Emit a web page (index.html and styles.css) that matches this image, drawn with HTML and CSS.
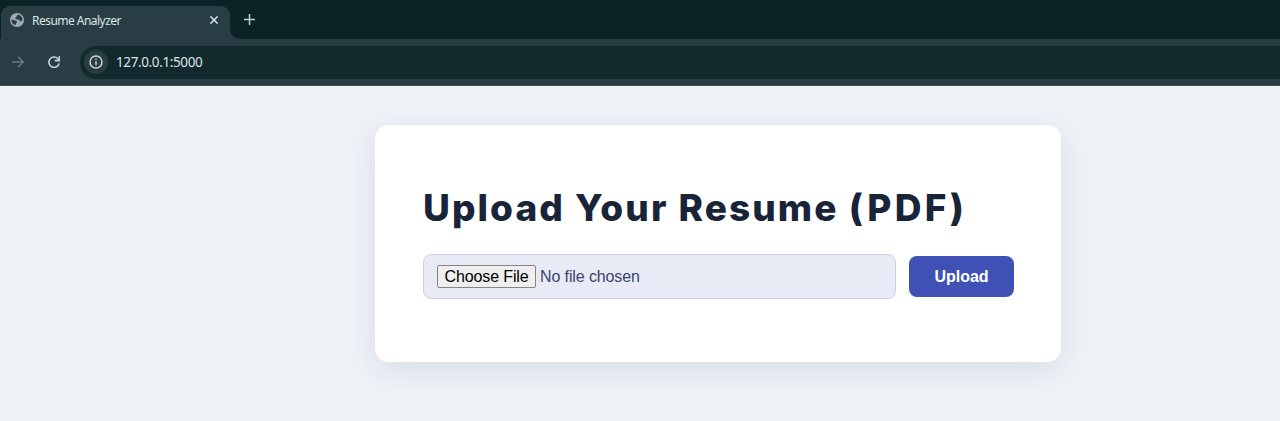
FILE: index.html
```html
<!DOCTYPE html>
<html lang="en">
<head>
<meta charset="utf-8">
<title>Resume Analyzer</title>
<link rel="stylesheet" href="styles.css">
</head>
<body>
<header class="browser">
  <div class="tabs">
    <div class="tab">
      <svg class="globe" viewBox="0 0 14 14"><circle cx="7" cy="7" r="7" fill="#a2adb3"/><path d="M8.500 1.700C7.300 2 6.300 2.800 6.500 3.800c.2.800-1.300.5-1.300 1.500 0 1.200 1.500 1.300 3 1.300 1.300 0 1 1.600 2 1.700 1 .1 1.400-.5 2.200-.9A5.500 5.500 0 0 0 8.500 1.700zM1.500 6.500c1.300 0 2.100.8 3.500.9 1.600.1 2.200.9 1.900 2-.2.800-1.200.7-1.200 1.600v1.300A5.600 5.600 0 0 1 1.500 6.500z" fill="#293e44"/></svg>
      <span class="tab-title">Resume Analyzer</span>
      <svg class="close" viewBox="0 0 8 8"><path d="M.4.4l7.200 7.200M7.600.4L.4 7.600" stroke="#dce5e8" stroke-width="1.500"/></svg>
    </div>
    <svg class="curve" viewBox="0 0 10 10"><path d="M0 0a10 10 0 0 0 10 10H0z" fill="#293e44"/></svg>
    <svg class="plus" viewBox="0 0 11 11"><path d="M5.500 0v11M0 5.500h11" stroke="#b9ced2" stroke-width="1.500"/></svg>
  </div>
  <div class="toolbar">
    <svg class="forward" viewBox="0 0 12 12"><path d="M.3 6h11M6 .7L11.300 6 6 11.300" fill="none" stroke="#6d7e83" stroke-width="1.400"/></svg>
    <svg class="reload" viewBox="0 0 12 12"><path d="M11.200 7.300A5.200 5.200 0 1 1 9.700 2.400L11.300 4" fill="none" stroke="#c5d5d9" stroke-width="1.600"/><path d="M11.400 0v4.600H6.800" fill="none" stroke="#c5d5d9" stroke-width="1.600"/></svg>
    <div class="address">
      <span class="info"><svg viewBox="0 0 14 14"><circle cx="7" cy="7" r="6" fill="none" stroke="#cad6da" stroke-width="1.500"/><path d="M7 6.200v4.100M7 3.600v1.500" stroke="#cad6da" stroke-width="1.500"/></svg></span>
      <span class="url">127.0.0.1:5000</span>
    </div>
  </div>
</header>
<main class="page">
  <section class="card">
    <h1 class="heading">Upload Your Resume <span class="format">(PDF)</span></h1>
    <form class="upload-form">
      <input class="file" type="file" accept=".pdf">
      <button class="submit" type="button">Upload</button>
    </form>
  </section>
</main>
</body>
</html>
```
FILE: styles.css
```css
* { box-sizing: border-box; }
body {
  margin: 0;
  height: 421px;
  overflow: hidden;
  background: #eff3f8;
  font-family: "Liberation Sans", Arial, sans-serif;
}
svg { display: block; flex: none; }
.browser {
  height: 86px;
  background: #293e44;
  border-bottom: 1px solid #3e4b50;
  font-family: "Noto Sans", sans-serif;
}
.tabs {
  display: flex;
  align-items: flex-end;
  height: 39px;
  background: #092327;
}
.tab {
  display: flex;
  align-items: center;
  width: 229px;
  height: 33px;
  margin-left: 1px;
  padding: 0 12px 5px 9px;
  background: #293e44;
  border-radius: 9px 9px 0 0;
}
.globe { width: 14px; height: 14px; }
.tab-title {
  flex: 1;
  margin-left: 8px;
  color: #dde5e7;
  font-size: 12px;
  letter-spacing: -0.53px;
  white-space: nowrap;
}
.close { width: 8px; height: 8px; }
.curve { width: 10px; height: 10px; }
.plus { width: 11px; height: 11px; margin: 0 0 14px 4px; }
.toolbar {
  display: flex;
  align-items: center;
  height: 46px;
  padding-left: 12px;
}
.forward { width: 12px; height: 12px; }
.reload { width: 12px; height: 12px; margin-left: 24px; }
.address {
  display: flex;
  flex: 1;
  align-items: center;
  height: 33px;
  margin-left: 20px;
  padding-left: 4px;
  background: #12292e;
  border-radius: 17px 0 0 17px;
}
.info {
  display: flex;
  align-items: center;
  justify-content: center;
  width: 24px;
  height: 24px;
  border-radius: 50%;
  background: #293e44;
}
.info svg { width: 14px; height: 14px; }
.url {
  margin-left: 8px;
  color: #dce4e6;
  font-size: 13.5px;
  letter-spacing: -0.38px;
}
.page { padding: 39px 0 0 375px; }
.card {
  width: 686px;
  height: 237px;
  padding: 60px 47px 0 48px;
  background: #fff;
  border-radius: 14px;
  box-shadow: 0 8px 32px rgba(30, 35, 60, 0.11);
}
.heading {
  margin: 0;
  height: 46px;
  color: #1a2439;
  font: 800 37px/46px Inter, sans-serif;
  letter-spacing: 2.05px;
  white-space: nowrap;
}
.format { letter-spacing: 3.4px; }
.upload-form {
  display: flex;
  align-items: center;
  gap: 13px;
  margin-top: 23px;
}
.file {
  width: 473px;
  height: 45px;
  margin-left: -0.5px;
  padding: 10px 14px 10px 13.5px;
  color: #3b4468;
  background: #e8eaf6;
  border: 1px solid #cdd1e8;
  border-radius: 8px;
  font: 16px "Liberation Sans", Arial, sans-serif;
  letter-spacing: -0.12px;
}
.file::file-selector-button {
  height: 23px;
  margin: 0 4px 0 0;
  padding: 0 6.500px;
  color: #000;
  background: #efefef;
  border: 1px solid #858585;
  border-radius: 2px;
  font: inherit;
  letter-spacing: -0.12px;
}
.submit {
  width: 105px;
  height: 41px;
  margin-left: 0.5px;
  padding: 0;
  color: #fff;
  background: #3f51b5;
  border: 0;
  border-radius: 8px;
  font: 700 16px "Liberation Sans", Arial, sans-serif;
}
```
